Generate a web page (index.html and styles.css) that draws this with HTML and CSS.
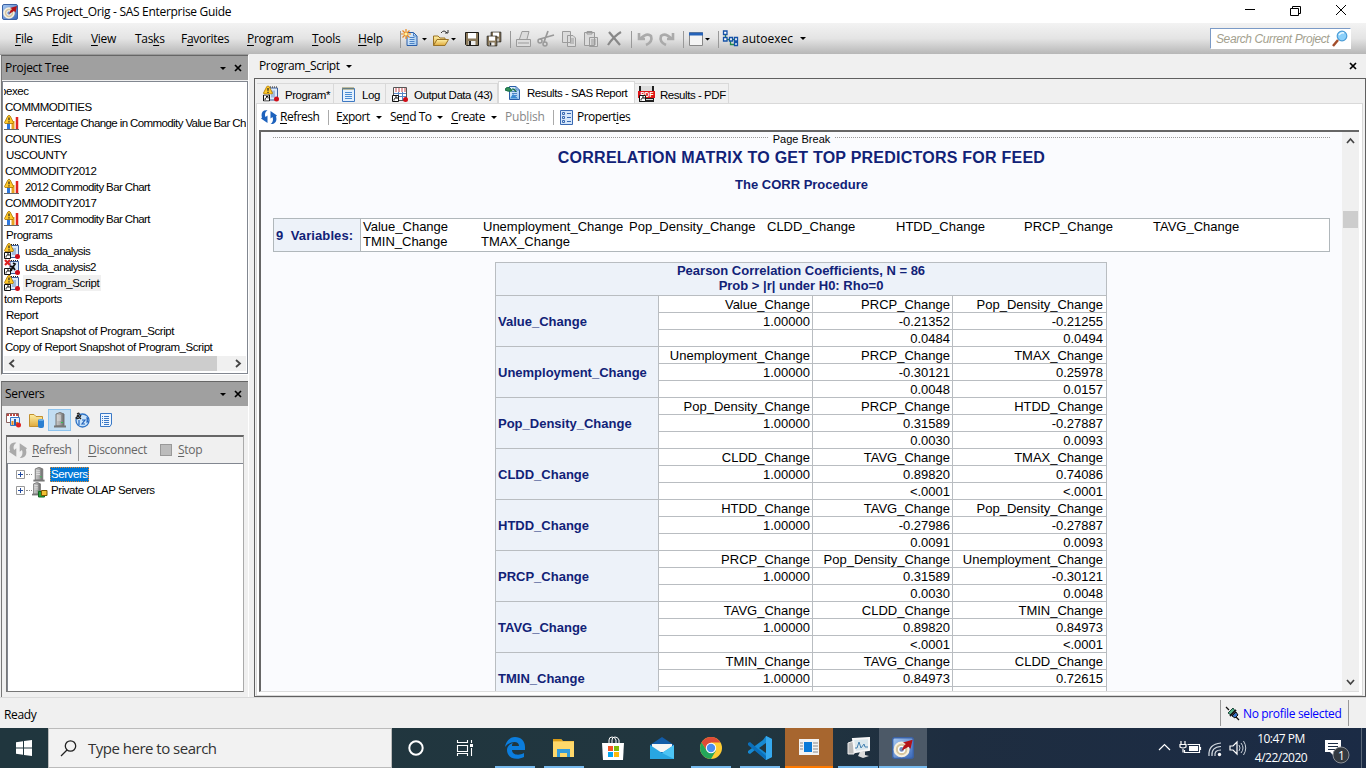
FILE: index.html
```html
<!DOCTYPE html>
<html lang="en">
<head>
<meta charset="utf-8">
<title>SAS Project_Orig - SAS Enterprise Guide</title>
<link rel="stylesheet" href="styles.css">
</head>
<body>
<svg class="defs" width="0" height="0">
  <defs>
    <linearGradient id="blue" x2="1" y2="1"><stop offset="0" stop-color="#e8f3fd"/><stop offset="1" stop-color="#9fc8ef"/></linearGradient>
    <linearGradient id="gold" x2="0" y2="1"><stop offset="0" stop-color="#fff0a5"/><stop offset="1" stop-color="#dfa93c"/></linearGradient>
    <linearGradient id="metal" x2="1" y2="0"><stop offset="0" stop-color="#ccc"/><stop offset=".5" stop-color="#aaa"/><stop offset="1" stop-color="#666"/></linearGradient>
    <linearGradient id="sasbg" x2="1" y2="1"><stop offset="0" stop-color="#a9caf2"/><stop offset="1" stop-color="#3766b9"/></linearGradient>
  </defs>
  <symbol id="sas" viewBox="0 0 16 16"><rect x=".5" y=".5" width="15" height="15" rx="1.5" fill="url(#sasbg)" stroke="#3b62a5"/><circle cx="7" cy="9" r="5" fill="#d6c6a0" stroke="#f7f0df" stroke-width="1.6"/><circle cx="7" cy="9" r="2.2" fill="#6d8fc4" stroke="#fff"/><path d="M7 10 8.500 6.500 10 5 8 4 15 2 13.500 8.500 12 7Z" fill="#b31217"/></symbol>
  <symbol id="warn" viewBox="0 0 10 9"><path d="M3.800 1Q5-.5 6.200 1L9.500 7.500 9 8.500H1L.5 7.500Z" fill="#ffc928" stroke="#a87400" stroke-width=".8"/><path d="M5 2.500V5.300M5 6.200V7.500" stroke="#222" stroke-width="1.200"/></symbol>
  <symbol id="short" viewBox="0 0 7 7"><path d="M.5.5H6.500V6.500H.5Z" fill="#fff" stroke="#111"/><path d="M2 5.500C2 3.500 3 3 4 3M3 2H5V4" fill="none" stroke="#111"/></symbol>
  <symbol id="note" viewBox="0 0 16 16"><path d="M2.500 2.500H14.500V15.500H2.500Z" fill="#e4f0fd" stroke="#3d78c2"/><path d="M3 1V4M5 1V4M7 1V4M9 1V4M11 1V4M13 1V4" stroke="#8a844c"/><path d="M5 6.500H12M5 8.500H12M5 10.500H12M5 12.500H12" stroke="#4a8cd3"/></symbol>
  <symbol id="prog" viewBox="0 0 16 16"><path d="M6 2.500H14.500V14.500H6Z" fill="#dcebfb" stroke="#3c5f9b"/><path d="M7 1.500H15" stroke="#222" stroke-dasharray="1 1"/><path d="M9 5V12M11 5V12" stroke="#6b8dbd"/><use href="#warn" width="10" height="9"/><use href="#short" y="9" width="7" height="7"/><circle cx="13.500" cy="13.500" r="2.500" fill="#d00d18"/></symbol>
  <symbol id="progx" viewBox="0 0 16 16"><path d="M6 2.500H14.500V14.500H6Z" fill="#dcebfb" stroke="#3c5f9b"/><path d="M7 1.500H15" stroke="#222" stroke-dasharray="1 1"/><path d="M1 1 6 6M6 1 1 6" stroke="#d22" stroke-width="2.200"/><path d="M9 4 11 5 9 8 6 7M9 8 11 11M9 7 7 12" fill="none" stroke="#111" stroke-width="1.800"/><use href="#short" y="9" width="7" height="7"/><circle cx="13.500" cy="13.500" r="2.500" fill="#d00d18"/></symbol>
  <symbol id="chart" viewBox="0 0 16 16"><path d="M0 14.500H15" stroke="#666"/><path d="M4.500 8V14" stroke="#2e78e0" stroke-width="3"/><path d="M9 6V14" stroke="#e6a322" stroke-width="3"/><path d="M13 2V14" stroke="#e02622" stroke-width="2.500"/><use href="#warn" width="10" height="9"/></symbol>
  <symbol id="data" viewBox="0 0 16 16"><path d="M1.500 1.500H14.500V14.500H1.500Z" fill="#fff" stroke="#555"/><path d="M3 3H14M3 5H14" stroke="#c7444b" stroke-dasharray="2 1"/><path d="M2 7.500H14M2 10.500H14M6.500 6V14M10.500 6V14" stroke="#5485c7"/><use href="#short" y="9" width="7" height="7"/><circle cx="13.500" cy="13.500" r="2.500" fill="#d00d18"/></symbol>
  <symbol id="refresh" viewBox="0 0 16 16"><path d="M6.500 1.500C2 .5-.5 4 1 8.500L0 9.500 6.500 14V6.500L4.500 8C3.500 5.500 4 3 6.500 1.500ZM9.500 15C14 15.500 16.500 12 15 7.500L16 6.500 9.500 2V9.500L11.500 8C12.500 10.500 12 13.500 9.500 15Z"/></symbol>
  <symbol id="server" viewBox="0 0 14 16"><path d="M3 2Q7-1 11 2V14H3Z" fill="url(#metal)" stroke="#777"/><path d="M4 4H8M4 6H8M4 8H8" stroke="#e0e0e0"/><path d="M1 14.500H13" stroke="#777" stroke-width="2"/><path d="M8 10.500H10" stroke="#30c050"/></symbol>
  <symbol id="plus" viewBox="0 0 9 9"><path d="M.5.5H8.500V8.500H.5Z" fill="#fff" stroke="#999"/><path d="M2 4.500H7M4.500 2V7" stroke="#214aa0"/></symbol>
  <symbol id="x" viewBox="0 0 8 8"><path d="M1 1 7 7M7 1 1 7" stroke="#000" stroke-width="1.700"/></symbol>
  <symbol id="doc" viewBox="0 0 16 16"><path d="M3.500 1.500H10L13.500 5V14.500H3.500Z" fill="url(#blue)" stroke="#295da8"/><path d="M10 1.500V5H13.500M6 6.500H11M6 8.500H11M6 10.500H11M6 12.500H11" fill="none" stroke="#4d83c6"/></symbol>
  <symbol id="folder" viewBox="0 0 17 16"><path d="M1.500 14.500V5H6L8 7H13V9" fill="url(#gold)" stroke="#997225"/><path d="M1.500 14.500 5 8.500H16.500L13 14.500Z" fill="url(#gold)" stroke="#997225"/></symbol>
  <symbol id="disk" viewBox="0 0 16 16"><path d="M1.500 1.500H14.500V14.500H2.500L1.500 13.500Z" fill="#8a795a" stroke="#1c1a16"/><path d="M4 2H12V7.500H4Z" fill="#fff"/><path d="M4.500 10H11.500V14H4.500Z" fill="#eee"/><path d="M6 10V14" stroke="#222" stroke-width="2"/></symbol>
  <symbol id="props" viewBox="0 0 13 16"><path d="M.5 1.500H12.500V15.500H.5Z" fill="#d5e6fa" stroke="#3969b2"/><path d="M2.500 3.500H4.500V5.500H2.500ZM2.500 7.500H4.500V9.500H2.500ZM2.500 11.500H4.500V13.500H2.500ZM7 4.500H11M7 8.500H11M7 12.500H11" fill="none" stroke="#3969b2"/></symbol>
</svg>

<header class="titlebar">
  <svg class="appicon" width="16" height="16"><use href="#sas"/></svg>
  <span class="title">SAS Project_Orig - SAS Enterprise Guide</span>
  <svg class="winbtns" width="110" height="14" viewBox="0 0 110 14"><path d="M4 6.500H14M49.500 5.500H57.500V12.500H49.500ZM51.500 5V3.500H59.500V10.500H58M95 2 105 12M105 2 95 12" fill="none" stroke="#000"/></svg>
</header>

<nav class="menubar">
  <div class="menus">
    <span style="width:37px"><u>F</u>ile</span><span style="width:39px"><u>E</u>dit</span><span style="width:44px"><u>V</u>iew</span><span style="width:46px">Tas<u>k</u>s</span><span style="width:66px">F<u>a</u>vorites</span><span style="width:65px"><u>P</u>rogram</span><span style="width:46px"><u>T</u>ools</span><span style="width:40px"><u>H</u>elp</span>
  </div>
  <svg class="tools" width="324" height="24" viewBox="0 0 324 24">
    <path d="M2.500 4V21M112.500 4V21M233.500 4V21M285.500 4V21M320.500 4V21" stroke="#999"/>
    <use href="#doc" x="5" y="4" width="17" height="16"/><path d="M8 2V12M3 7H13M4.500 3.500 11.500 10.500M11.500 3.500 4.500 10.500" stroke="#e98920" stroke-width="1.200"/><circle cx="8" cy="7" r="1.600" fill="#fff3a0"/>
    <path d="M24 11H29L26.500 13.500ZM53 11H58L55.500 13.500ZM307 11H312L309.500 13.500Z"/>
    <use href="#folder" x="34" y="4" width="17" height="16"/><path d="M43 6Q46 2 49 6M47 6H50V3" fill="none" stroke="#333"/>
    <use href="#disk" x="66" y="4" width="16" height="16"/><use href="#disk" x="92" y="3" width="12" height="14"/><use href="#disk" x="88" y="7" width="12" height="14"/>
    <g fill="#dcdcdc" stroke="#9b9b9b"><path d="M121.500 12 124 4.500H131L129 12M118.500 12.500H132.500V19.500H118.500ZM120 16H131"/><path d="M164.500 4.500H172.500V15.500H164.500ZM169.500 8.500H175L177.500 11V19.500H169.500ZM172 12H176M172 14H176M172 16H176"/><path d="M186.500 5.500H196.500V18.500H186.500ZM189 4.500H194V7H189ZM191.500 10.500H199.500V19.500H191.500ZM193 13H198M193 15H198M193 17H198"/></g>
    <path d="M142 12 156 8M150 4 146 15" stroke="#999" stroke-width="1.700"/><circle cx="142" cy="14" r="2" fill="none" stroke="#999" stroke-width="1.500"/><circle cx="147" cy="17" r="2" fill="none" stroke="#999" stroke-width="1.500"/>
    <path d="M211 5 222 18M223 5Q216 9 210 18" fill="none" stroke="#888" stroke-width="2.200"/>
    <path d="M241 6V12H247M242 12Q249 5 253 9 255 15 248 18M275 6V12H269M274 12Q267 5 263 9 261 15 268 18" fill="none" stroke="#aaa" stroke-width="2.600"/>
    <path d="M291.500 5.500H304.500V18.500H291.500Z" fill="#f4f4f4" stroke="#888"/><path d="M291 7H305" stroke="#2562b9" stroke-width="3"/>
  </svg>
  <svg class="flow" width="17" height="17" viewBox="0 0 17 17"><path d="M3.500 4V9.500H7M10 9.500H13M8.500 11V14.500H13" fill="none" stroke="#23894c" stroke-width="1.300"/><path d="M1.500 1H5V4.500H1.500ZM1.500 7.500H5V11H1.500ZM7.500 7.500H10.500V11H7.500ZM12.500 7.500H15.500V11H12.500ZM12.500 12.500H15.500V15.500H12.500Z" fill="#fff" stroke="#1452a8" stroke-width="1.300"/></svg>
  <span class="auto">autoexec</span><i class="caret"></i>
  <div class="search"><span>Search Current Project</span><svg width="16" height="17" viewBox="0 0 16 17"><path d="M1 16 6 10" stroke="#a34d2b" stroke-width="2.500"/><circle cx="10" cy="6" r="4.800" fill="#8bd0fa" stroke="#4b9cd6" stroke-width="1.200"/><path d="M7 5Q9 2 12 3" stroke="#eaf8ff" fill="none" stroke-width="1.500"/></svg></div>
</nav>

<main class="workspace">
  <aside class="dock">
    <section class="panel tree">
      <h2>Project Tree<i class="caret"></i><svg width="8" height="8"><use href="#x"/></svg></h2>
      <div class="treebox">
        <ul>
          <li class="cut">pexec</li><li>COMMMODITIES</li>
          <li class="ic"><svg width="16" height="16"><use href="#chart"/></svg><span>Percentage Change in Commodity Value Bar Chart</span></li>
          <li>COUNTIES</li><li class="in">USCOUNTY</li><li>COMMODITY2012</li>
          <li class="ic"><svg width="16" height="16"><use href="#chart"/></svg><span>2012 Commodity Bar Chart</span></li>
          <li>COMMODITY2017</li>
          <li class="ic"><svg width="16" height="16"><use href="#chart"/></svg><span>2017 Commodity Bar Chart</span></li>
          <li class="in">Programs</li>
          <li class="ic"><svg width="16" height="16"><use href="#prog"/></svg><span>usda_analysis</span></li>
          <li class="ic"><svg width="16" height="16"><use href="#progx"/></svg><span>usda_analysis2</span></li>
          <li class="ic"><svg width="16" height="16"><use href="#prog"/></svg><span class="hot">Program_Script</span></li>
          <li class="out">tom Reports</li><li class="in">Report</li><li class="in">Report Snapshot of Program_Script</li><li>Copy of Report Snapshot of Program_Script</li>
        </ul>
        <div class="hscroll"><svg width="8" height="9" viewBox="0 0 8 9"><path d="M6 1 2 4.500 6 8" fill="none" stroke="#444" stroke-width="1.800"/></svg><i></i><svg width="8" height="9" viewBox="0 0 8 9"><path d="M2 1 6 4.500 2 8" fill="none" stroke="#444" stroke-width="1.800"/></svg></div>
      </div>
    </section>
    <section class="panel servers">
      <h2>Servers<i class="caret"></i><svg width="8" height="8"><use href="#x"/></svg></h2>
      <div class="modes">
        <span><svg width="16" height="16" viewBox="0 0 16 16"><path d="M1.500 1.500H13.500V10.500H1.500Z" fill="#fff" stroke="#8a6360"/><path d="M2 3H13" stroke="#bd4944" stroke-width="2" stroke-dasharray="2 1"/><path d="M5.500 5.500H14.500V13.500H5.500Z" fill="#e5f1fe" stroke="#3375c6"/><path d="M7.500 9V13M12 10V13" stroke="#e48b1c" stroke-width="2"/><path d="M10 7V13" stroke="#255cb0" stroke-width="2"/><circle cx="13.500" cy="13" r="2.500" fill="#d22"/></svg></span>
        <span><svg width="17" height="16" viewBox="0 0 17 16"><path d="M1.500 2.500H6L8 4.500H14.500V14.500H1.500Z" fill="url(#gold)" stroke="#c2902f"/><rect x="10" y="7" width="6" height="9" rx="2" fill="#2b7fd1"/><path d="M11 8H15" stroke="#9ed5ff"/></svg></span>
        <span class="on"><svg width="14" height="16"><use href="#server"/></svg></span>
        <span><svg width="16" height="16" viewBox="0 0 16 16"><circle cx="8.500" cy="8.500" r="6.500" fill="#c9e3fa" stroke="#2e73c6" stroke-width="1.300"/><path d="M5 8V13M8 8H11L8 12H11M12 6H14L13 8 14 10H12" fill="none" stroke="#2464bb" stroke-width="1.200"/><path d="M3 2Q6 0 5 3L2 6Q5 8 7 3M3 3 7 7" fill="none" stroke="#222" stroke-width="1.200"/></svg></span>
        <span><svg width="15" height="16" viewBox="0 0 15 16"><path d="M2.500 1.500H13.500V12L12 14.500H2.500Z" fill="#edf5fe" stroke="#3978c6"/><path d="M4 4.500H5M6 4.500H11M4 6.500H5M6 6.500H11M4 8.500H5M6 8.500H11M4 10.500H5M6 10.500H11M6 12.500H11" stroke="#3978c6"/></svg></span>
      </div>
      <div class="srvbox">
        <div class="srvtools"><svg width="20" height="18" class="gray"><use href="#refresh"/></svg><span class="r"><u>R</u>efresh</span><i></i><span class="d"><u>D</u>isconnect</span><b></b><span><u>S</u>top</span></div>
        <div class="srvtree">
          <div><svg width="9" height="9"><use href="#plus"/></svg><em></em><svg width="14" height="15"><use href="#server"/></svg><span class="sel">Servers</span></div>
          <div><svg width="9" height="9"><use href="#plus"/></svg><em></em><svg width="16" height="16" viewBox="0 0 16 16"><use href="#server" x="-1" width="12" height="14"/><path d="M6.500 9.500H12.500V15H6.500Z" fill="#25a53c" stroke="#146322"/><path d="M9.500 8.500H15V13.500H9.500Z" fill="#f1c134" stroke="#775700"/></svg><span>Private OLAP Servers</span></div>
        </div>
      </div>
    </section>
  </aside>

  <section class="document">
    <div class="dochead"><span>Program_Script</span><i class="caret"></i><svg width="8" height="8"><use href="#x"/></svg></div>
    <div class="docframe">
      <div class="tabs">
        <span style="width:77px"><svg width="16" height="17"><use href="#prog"/></svg><b>Program*</b></span>
        <span style="width:52px"><svg width="16" height="16"><use href="#note"/></svg><b>Log</b></span>
        <span style="width:112px"><svg width="16" height="16"><use href="#data"/></svg><b>Output Data (43)</b></span>
        <span class="active" style="width:137px"><svg width="16" height="16" viewBox="0 0 16 16"><use href="#doc" x="1" width="16" height="16"/><path d="M1 3Q5 1 7 6 3 7 0 5ZM7 4Q10 3 11 7" fill="#319158" stroke="#166b45"/><path d="M5 13.500 8 9 13 13.500Z" fill="#398ad3"/></svg><b>Results - SAS Report</b></span>
        <span class="pdf" style="width:94px"><svg width="17" height="16" viewBox="0 0 17 16"><path d="M1 0H16V16H1Z" fill="#222"/><path d="M3 0H14V5H3Z" fill="#ddd"/><path d="M0 5H17V12H0Z" fill="#df1417"/><text x="2.500" y="11" font-family="Liberation Sans" font-size="6.500" font-weight="bold" letter-spacing="0" fill="#fff">PDF</text><path d="M8 13.500H15" stroke="#ddd"/><use href="#short" x="1" y="9" width="7" height="7"/></svg><b>Results - PDF</b></span>
      </div>
      <div class="page">
        <div class="acts">
          <svg width="16" height="16" class="bluearrow"><use href="#refresh"/></svg><span style="width:48px"><u>R</u>efresh</span><i class="bar"></i>
          <span style="width:51px">E<u>x</u>port<i class="caret"></i></span><span style="width:58px">Se<u>n</u>d To<i class="caret"></i></span><span style="width:51px"><u>C</u>reate<i class="caret"></i></span><span class="dim" style="width:48px">Pub<u>l</u>ish</span><i class="bar two"></i><svg width="13" height="16"><use href="#props"/></svg><span class="pr">Propert<u>i</u>es</span>
        </div>
        <div class="frame">
          <div class="report">
            <div class="break"><i></i><span>Page Break</span><i></i></div>
            <h1>CORRELATION MATRIX TO GET TOP PREDICTORS FOR FEED</h1>
            <h3>The CORR Procedure</h3>
            <div class="vars"><b>9&nbsp; Variables:</b><div class="varlist"><span>Value_Change</span><span>Unemployment_Change</span><span>Pop_Density_Change</span><span>CLDD_Change</span><span>HTDD_Change</span><span>PRCP_Change</span><span>TAVG_Change</span><span>TMIN_Change</span><span class="tmax">TMAX_Change</span></div></div>
            <table>
              <colgroup><col class="c0"><col class="c1"><col class="c2"><col class="c3"></colgroup>
              <tr class="hd"><th colspan="4">Pearson Correlation Coefficients, N = 86<br>Prob &gt; |r| under H0: Rho=0</th></tr>
              <tr><th rowspan="3">Value_Change</th><td>Value_Change</td><td>PRCP_Change</td><td>Pop_Density_Change</td></tr><tr><td>1.00000</td><td>-0.21352</td><td>-0.21255</td></tr><tr><td></td><td>0.0484</td><td>0.0494</td></tr>
              <tr><th rowspan="3">Unemployment_Change</th><td>Unemployment_Change</td><td>PRCP_Change</td><td>TMAX_Change</td></tr><tr><td>1.00000</td><td>-0.30121</td><td>0.25978</td></tr><tr><td></td><td>0.0048</td><td>0.0157</td></tr>
              <tr><th rowspan="3">Pop_Density_Change</th><td>Pop_Density_Change</td><td>PRCP_Change</td><td>HTDD_Change</td></tr><tr><td>1.00000</td><td>0.31589</td><td>-0.27887</td></tr><tr><td></td><td>0.0030</td><td>0.0093</td></tr>
              <tr><th rowspan="3">CLDD_Change</th><td>CLDD_Change</td><td>TAVG_Change</td><td>TMAX_Change</td></tr><tr><td>1.00000</td><td>0.89820</td><td>0.74086</td></tr><tr><td></td><td>&lt;.0001</td><td>&lt;.0001</td></tr>
              <tr><th rowspan="3">HTDD_Change</th><td>HTDD_Change</td><td>TAVG_Change</td><td>Pop_Density_Change</td></tr><tr><td>1.00000</td><td>-0.27986</td><td>-0.27887</td></tr><tr><td></td><td>0.0091</td><td>0.0093</td></tr>
              <tr><th rowspan="3">PRCP_Change</th><td>PRCP_Change</td><td>Pop_Density_Change</td><td>Unemployment_Change</td></tr><tr><td>1.00000</td><td>0.31589</td><td>-0.30121</td></tr><tr><td></td><td>0.0030</td><td>0.0048</td></tr>
              <tr><th rowspan="3">TAVG_Change</th><td>TAVG_Change</td><td>CLDD_Change</td><td>TMIN_Change</td></tr><tr><td>1.00000</td><td>0.89820</td><td>0.84973</td></tr><tr><td></td><td>&lt;.0001</td><td>&lt;.0001</td></tr>
              <tr><th rowspan="3">TMIN_Change</th><td>TMIN_Change</td><td>TAVG_Change</td><td>CLDD_Change</td></tr><tr><td>1.00000</td><td>0.84973</td><td>0.72615</td></tr><tr><td></td><td>&lt;.0001</td><td>&lt;.0001</td></tr>
            </table>
          </div>
          <div class="vscroll"><svg width="9" height="8" viewBox="0 0 9 8"><path d="M1 6 4.500 2 8 6" fill="none" stroke="#444" stroke-width="1.700"/></svg><i></i><svg width="9" height="8" viewBox="0 0 9 8"><path d="M1 2 4.500 6 8 2" fill="none" stroke="#444" stroke-width="1.700"/></svg></div>
        </div>
      </div>
    </div>
  </section>
</main>

<footer class="status"><span>Ready</span><div><svg width="15" height="15" viewBox="0 0 15 15"><path d="M1 1 4 4M11 11 14 14" stroke="#111" stroke-width="1.300"/><path d="M3 7 8 2 10 5 6 9Z" fill="#55b48a" stroke="#1b4438"/><path d="M7 10 11 6 13 9 10 12Z" fill="#3671c4" stroke="#111"/><path d="M5 10 11 4" stroke="#111" stroke-width="1.800"/></svg><span>No profile selected</span></div></footer>

<div class="taskbar">
  <div class="start"><svg width="16" height="16" viewBox="0 0 16 16"><path d="M0 2.200 7 1.200V7.500H0ZM8 1 16 0V7.500H8ZM0 8.500H7V14.800L0 13.800ZM8 8.500H16V16L8 15Z" fill="#fff"/></svg></div>
  <div class="find"><svg width="17" height="17" viewBox="0 0 17 17"><circle cx="10.500" cy="6" r="5.200" fill="none" stroke="#222" stroke-width="1.300"/><path d="M7 10 1 16" stroke="#222" stroke-width="1.300"/></svg><span>Type here to search</span></div>
  <div class="apps">
    <span><svg width="16" height="16" viewBox="0 0 16 16"><circle cx="8" cy="8" r="6.700" fill="none" stroke="#fff" stroke-width="2"/></svg></span>
    <span class="tv"><svg width="18" height="16" viewBox="0 0 18 16"><path d="M1.500 0V2.500H11.500V0M1.500 5.500H11.500V11.500H1.500ZM1.500 16V13.500H11.500V16M15.500 0V3M15.500 8V16" fill="none" stroke="#fff" stroke-width="1.100"/><path d="M14 4H17V7H14Z" fill="#fff"/></svg></span>
    <span class="run"><svg width="22" height="22" viewBox="0 0 22 22"><path d="M1 10C2 4 6 0 11 0 17 0 21 4 21 10V13H8C8 18 15 19 20 16V20C12 24 3 21 3 13 3 9 6 7 9 6 8 7 8 8 8 9H15C15 3 6 4 1 10Z" fill="#0b7ddd"/></svg></span>
    <span class="run"><svg width="22" height="20" viewBox="0 0 22 20"><path d="M0 1H8L10 3H21V19H0Z" fill="#f4c34c"/><path d="M0 1H8L9 3H0Z" fill="#d99b16"/><path d="M0 4H21V19H0Z" fill="#ffd86a"/><path d="M4 19V11H17V19H14V15H7V19Z" fill="#359cdb"/></svg></span>
    <span><svg width="24" height="24" viewBox="0 0 24 24"><path d="M8 8V4Q8 1 11 1T15 4V8M11 8V4Q11 1 14 1T18 4V8" fill="none" stroke="#fff"/><path d="M1 7H23L22 24H2Z" fill="#fff"/><path d="M7 10H12V15H7Z" fill="#f35325"/><path d="M13 10H18V15H13Z" fill="#81bc06"/><path d="M7 16H12V21H7Z" fill="#05a6f0"/><path d="M13 16H18V21H13Z" fill="#ffba08"/></svg></span>
    <span><svg width="24" height="23" viewBox="0 0 24 23"><path d="M0 8 12 0 24 8V22H0Z" fill="#125ca8"/><path d="M2 7H22V15H2Z" fill="#f5f5f5"/><path d="M0 8 12 16 24 8V22H0Z" fill="#29a6e2"/><path d="M12 16 24 8V22Z" fill="#4dc4f4"/></svg></span>
    <span class="run"><svg width="22" height="22" viewBox="0 0 22 22"><circle cx="11" cy="11" r="11" fill="#fc3"/><path d="M1.500 5.500A11 11 0 0 1 20.500 5.500H11L7 14Z" fill="#df4b37"/><path d="M1.500 5.500A11 11 0 0 0 11 22L16 13.500 7 14Z" fill="#24a65a"/><circle cx="11" cy="11" r="5.200" fill="#fff"/><circle cx="11" cy="11" r="4.200" fill="#4b8ef1"/></svg></span>
    <span class="run"><svg width="24" height="24" viewBox="0 0 24 24"><path d="M18 0 24 3V21L18 24 7 14 2 18 0 17V15L15 4ZM18 7 11 12 18 17Z" fill="#1689d2" fill-rule="evenodd"/><path d="M2 6 18 20V24L0 9V7Z" fill="#0b6fba"/><path d="M18 0 24 3V21L18 24Z" fill="#35a9ef"/></svg></span>
    <span class="orange"><svg width="20" height="17" viewBox="0 0 20 17"><path d="M0 0H20V16H0Z" fill="#f2f2f2"/><path d="M5 3H13V13H5Z" fill="#0879d8"/><path d="M1 4H4M1 7H4M1 10H4M14 4H19M14 7H19M14 10H19M14 13H19" stroke="#888"/></svg></span>
    <span class="run mon"><svg width="23" height="22" viewBox="0 0 23 22"><path d="M1 6 7 4V17H1Z" fill="#bbb" stroke="#eee"/><path d="M6 2 22 1 22 13 8 15Z" fill="#dae7ed" stroke="#f7f7f7" stroke-width="2"/><path d="M8 11H10L12 5 14 11 17 7 18 10H21" fill="none" stroke="#4280b1"/><path d="M13 15 18 14V18L22 19 16 21 11 19Z" fill="#ddd"/></svg></span>
    <span class="run here"><svg width="22" height="22"><use href="#sas"/></svg></span>
  </div>
  <div class="tray"><svg width="90" height="18" viewBox="0 0 90 18"><path d="M2 11 7.500 5.500 13 11M30.500 5.500H42.500V13.500H27.500V11M43.500 8V11M24 2V5M28 2V5M23 5.500H29V8Q26 10 23 8ZM26 10V13.500" fill="none" stroke="#fff" stroke-width="1.200"/><path d="M32 7H41V12H32Z" fill="#fff"/><path d="M52 17Q51 5 64 4M55 17Q54 8 64 7.500M58 17Q57 11 64 11" fill="none" stroke="#d5dbe2" stroke-width="1.200"/><circle cx="62.500" cy="15.500" r="1.700" fill="#fff"/><path d="M73 7H76L80 3V15L76 11H73Z" fill="none" stroke="#fff" stroke-width="1.200"/><path d="M82 6Q84 9 82 12M84 4Q88 9 84 14M86.500 2Q91 9 86.500 16" fill="none" stroke="#cbd2da"/></svg></div>
  <div class="clock">10:47 PM<br>4/22/2020</div>
  <svg class="notif" width="25" height="25" viewBox="0 0 25 25"><path d="M0 1H16V13H9V17L5 13H0Z" fill="#fff"/><path d="M3 4.500H13M3 7.500H13M3 10.500H10" stroke="#1b2c44"/><circle cx="16" cy="16" r="8" fill="#343a40" stroke="#8b8f94"/><text x="13" y="20.500" font-family="Open Sans" font-size="12" fill="#fff">1</text></svg>
  <i class="desk"></i>
</div>
</body>
</html>
```
FILE: styles.css
```css
* { box-sizing: border-box; }
body { margin: 0; width: 1366px; height: 768px; overflow: hidden; display: flex; flex-direction: column; background: #f0f0f0; color: #000; font: 12px/16px "Open Sans", sans-serif; letter-spacing: -.3px; white-space: nowrap; }
svg { display: block; flex: none; }
.defs { position: absolute; }
u { text-underline-offset: 2px; text-decoration-thickness: 1px; }
ul, h1, h2, h3 { margin: 0; padding: 0; font-size: inherit; font-weight: normal; list-style: none; }
.caret { width: 0; height: 0; border: 3px solid transparent; border-top-color: #000; border-bottom: 0; flex: none; }

.titlebar { height: 23px; background: #fff; display: flex; align-items: center; padding-left: 2px; flex: none; }
.title { margin-left: 5px; }
.winbtns { margin: -3px 15px 0 auto; }
.menubar { height: 31px; background: linear-gradient(#f3f3f3, #e4e4e4 50%, #b7b7b7); display: flex; align-items: center; flex: none; padding-left: 15px; }
.menus { display: flex; width: 383px; }
.menus span { flex: none; }
.flow { margin-left: 0; }
.auto { margin-left: 3px; width: 58px; letter-spacing: 0; }
.search { margin-left: auto; margin-right: 15px; width: 141px; height: 21px; background: #fff; border: 1px solid #7b9ac6; border-right-color: #fff; border-bottom-color: #fff; display: flex; align-items: center; justify-content: space-between; padding: 0 2px 0 5px; font: italic 12px/16px "Liberation Sans", sans-serif; letter-spacing: -.4px; color: #a39f8e; }

.workspace { height: 644px; display: flex; gap: 5px; flex: none; border-bottom: 1px solid #dadada; }
.dock { width: 249px; padding-left: 1px; border-right: 1px solid #fff; border-top: 1px solid #999; flex: none; display: flex; flex-direction: column; gap: 6px; }
.panel { border-left: 1px solid #777; border-top: 1px solid #666; }
.panel h2 { height: 24px; background: #a0a0a0; display: flex; align-items: center; padding: 0 6px 0 3px; }
.panel h2 .caret { margin: 1px 8px 0 auto; }
.tree { height: 320px; border-bottom: 1px solid #fff; }
.treebox { margin-top: 1px; height: 293px; border: 1px solid #828790; background: #fff; padding: 1px 1px 0; overflow: hidden; }
.treebox ul, .srvtree { font: 11.5px/16px "Liberation Sans", sans-serif; letter-spacing: -.43px; }
.treebox li { height: 16px; padding-left: 1px; display: flex; overflow: hidden; }
.treebox li.in { padding-left: 2px; }
.treebox li.out { padding-left: 0; }
.treebox li.cut { text-indent: -4px; padding-left: 0; }
.treebox li.ic { padding-left: 0; letter-spacing: -.6px; }
.treebox li.ic span { margin-left: 3px; padding: 0 2px 0 2px; }
.treebox li .hot { background: #f0f0f0; letter-spacing: -.4px; }
.hscroll { height: 15px; margin-top: 1px; background: #f0f0f0; display: flex; align-items: center; justify-content: space-between; padding: 0 4px; }
.hscroll i { width: 157px; height: 15px; background: #cdcdcd; margin-left: 26px; }
.servers { height: 316px; }
.modes { height: 29px; display: flex; align-items: center; padding-bottom: 1px; }
.modes span { width: 22px; height: 22px; display: flex; align-items: center; justify-content: center; }
.modes .on { width: 23px; background: #c2ddf2; border: 1px solid #8cc3ee; }
.modes span:nth-child(2) { margin: 0 1px; }
.modes span:nth-child(5) { margin-left: 1px; }
.srvbox { margin-left: 4px; width: 238px; height: 257px; border: 1px solid #777; border-top: 2px solid #666; border-right-color: #aaa; }
.srvtools { height: 26px; color: #666; display: flex; align-items: center; letter-spacing: -.3px; padding-left: 1px; }
.gray { fill: #aaa; }
.srvtools .r { margin-left: 4px; width: 46px; letter-spacing: -.5px; }
.srvtools i { width: 1px; height: 22px; background: #999; margin-right: 9px; }
.srvtools .d { width: 72px; }
.srvtools b { width: 12px; height: 12px; background: #bcbcbc; border: 1px solid #999; margin-right: 6px; }
.srvtree { height: 228px; background: #fff; border: 1px solid #828790; border-right: 0; border-bottom: 0; padding: 2px 0 0 8px; }
.srvtree div { height: 16px; display: flex; align-items: center; }
.srvtree em { width: 6px; border-top: 1px dotted #888; margin: 0 1px; }
.srvtree svg:nth-of-type(2) { margin-left: -1px; }
.srvtree span { margin-left: 4px; padding: 0 1px; line-height: 15px; }
.srvtree div:last-child span { margin-left: 2px; }
.srvtree .sel { background: #0078d7; color: #fff; outline: 1px dotted #e98728; outline-offset: -1px; }

.document { width: 1112px; height: 643px; display: flex; flex-direction: column; }
.dochead { height: 25px; display: flex; align-items: center; padding: 0 9px 0 5px; letter-spacing: -.35px; }
.dochead .caret { margin-left: 6px; }
.dochead svg { margin-left: auto; }
.docframe { height: 619px; border: 1px solid #606060; padding: 2px 2px 1px 1px; }
.tabs { height: 22px; padding-left: 1px; display: flex; align-items: flex-end; font: 11.5px/18px "Liberation Sans", sans-serif; letter-spacing: -.45px; }
.tabs span { height: 20px; flex: none; display: flex; align-items: center; padding-left: 6px; border: 1px solid #d9d9d9; border-left: 0; border-bottom: 0; }
.tabs b { font-weight: normal; margin: 2px 0 0 6px; }
.tabs .active { height: 22px; background: #fff; border-left: 1px solid #d9d9d9; }
.tabs .active b { margin-top: 0; }
.tabs .pdf { padding-left: 3px; }
.tabs .pdf b { margin-left: 5px; }
.page { height: 593px; background: #fff; border: 1px solid #d9d9d9; }
.acts { height: 26px; display: flex; align-items: center; padding-left: 4px; letter-spacing: -.5px; }
.acts span { margin-left: 3px; flex: none; display: flex; align-items: center; white-space: pre; }
.acts span .caret { margin-left: 6px; }
.acts .bar { width: 1px; height: 15px; background: #aaa; margin-right: 4px; }
.acts .two { margin: 0 6px 0 0; }
.acts .dim { color: #888; letter-spacing: -.2px; }
.acts .pr { margin-left: 4px; }
.bluearrow { fill: #1d62bd; }
.frame { margin-left: 2px; width: 1100px; height: 562px; border-left: 2px solid #666; border-top: 2px solid #666; border-bottom: 1px solid #ddd; display: flex; overflow: hidden; }
.report { width: 1081px; height: 559px; padding: 0 12px; background: #fafbfe; overflow: hidden; font: 13px/15px "Liberation Sans", sans-serif; letter-spacing: 0; }
.break { display: flex; gap: 5px; height: 13px; line-height: 14px; font-size: 11px; letter-spacing: 0; }
.break i { flex: 1; height: 6px; border-bottom: 1px dotted #999; }
.report h1 { margin-top: 3px; text-align: center; font: bold 16px/20px "Liberation Sans", sans-serif; letter-spacing: .24px; color: #112277; }
.report h3 { margin-top: 9px; text-align: center; font-weight: bold; color: #112277; line-height: 16px; }
.vars { margin-top: 25px; height: 34px; width: 1057px; border: 1px solid #b0b7bb; display: flex; background: #fff; }
.vars > b { width: 87px; flex: none; background: #edf2f9; border-right: 1px solid #b0b7bb; color: #112277; padding-left: 2px; line-height: 34px; letter-spacing: .1px; }
.varlist { flex: none; padding-left: 2px; display: grid; grid-template-columns: 120px 146px 138px 129px 128px 129px 120px; grid-template-rows: 15px 15px; }
.tmax { margin-left: -2px; }
table { margin: 10px 0 0 222px; width: 612px; table-layout: fixed; border-collapse: collapse; background: #fff; }
.c0 { width: 163px; } .c1 { width: 154px; } .c2 { width: 140px; } .c3 { width: 154px; }
tr { height: 17px; }
.hd { height: 33px; }
td, th { border: 1px solid #b9bdc1; padding: 2px 2px 0; line-height: 14px; height: 17px; }
td { text-align: right; }
td:last-child { padding-right: 3px; }
th { text-align: left; background: #edf2f9; color: #112277; font-weight: bold; }
.hd th { text-align: center; line-height: 15px; padding: 0 2px 2px; height: 33px; }
.vscroll { width: 17px; background: #f0f0f0; display: flex; flex-direction: column; align-items: center; padding: 5px 0; }
.vscroll i { width: 15px; height: 17px; margin-top: 66px; background: #cdcdcd; }
.vscroll svg:last-child { margin-top: auto; }

.status { height: 30px; display: flex; justify-content: space-between; padding-left: 4px; line-height: 33px; flex: none; letter-spacing: -.35px; }
.status div { width: 129px; height: 26px; margin: 2px 17px 0 0; border-left: 1px solid #999; border-right: 1px solid #999; color: #00f; display: flex; align-items: center; gap: 3px; padding-left: 4px; }

.taskbar { height: 40px; background: linear-gradient(90deg, #20363e, #21363f 55%, #1e2d40 70%, #1b2b45); display: flex; flex: none; color: #fff; }
.start { width: 48px; display: flex; align-items: center; justify-content: center; }
.find { width: 344px; background: #f2f2f2; border: 1px solid #bbb; color: #333; display: flex; align-items: center; padding-left: 11px; font-size: 15px; letter-spacing: -.5px; }
.find span { margin-left: 11px; }
.apps { display: flex; gap: 1px; }
.apps span { width: 48px; height: 40px; display: flex; align-items: center; justify-content: center; }
.apps .tv { margin-right: 2px; width: 47px; }
.apps .run { background: linear-gradient(#76b9ed, #76b9ed) 50% 100% / 40px 2px no-repeat; }
.apps .orange { background: #a7662f; border-bottom: 2px solid #ff7a00; }
.apps .here { background: linear-gradient(#76b9ed, #76b9ed) 50% 100% / 48px 2px no-repeat #4c5967; margin-left: -4px; }
.tray { margin-left: auto; display: flex; align-items: center; margin-right: 3px; }
.clock { width: 62px; text-align: center; line-height: 19px; padding-top: 1px; letter-spacing: -.5px; }
.notif { margin: 11px 0 0 13px; }
.desk { width: 1px; height: 40px; background: #5a6778; margin: 0 4px 0 11px; }
```
